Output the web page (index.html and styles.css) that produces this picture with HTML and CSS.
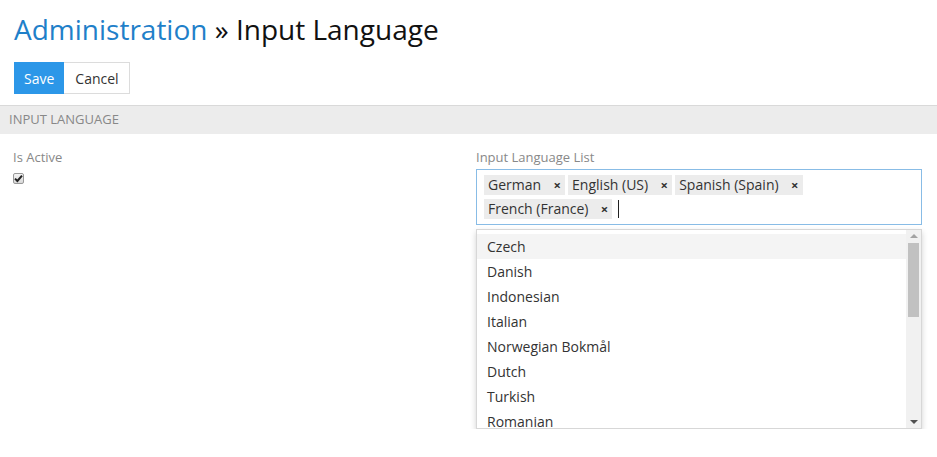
FILE: index.html
```html
<!DOCTYPE html>
<html>
<head>
<meta charset="utf-8">
<link rel="stylesheet" href="styles.css">
</head>
<body>
<div class="top">
  <h1 class="title"><span class="crumb">Administration</span> » Input Language</h1>
  <div class="actions">
    <button class="btn btn-primary">Save</button><button class="btn btn-default">Cancel</button>
  </div>
</div>
<div class="section-head">INPUT LANGUAGE</div>
<div class="form">
  <div class="field">
    <div class="label">Is Active</div>
    <span class="check"><svg width="9" height="9" viewBox="0 0 9 9"><path d="M1 4.6 L3.4 7 L8 1.6" fill="none" stroke="#222" stroke-width="2"/></svg></span>
  </div>
  <div class="field">
    <div class="label">Input Language List</div>
    <div class="tagbox">
      <span class="tag">German<span class="x">×</span></span>
      <span class="tag">English (US)<span class="x">×</span></span>
      <span class="tag">Spanish (Spain)<span class="x">×</span></span>
      <span class="tag">French (France)<span class="x">×</span></span>
      <span class="caret"></span>
    </div>
    <div class="dropdown">
      <ul class="options">
        <li class="hl">Czech</li>
        <li>Danish</li>
        <li>Indonesian</li>
        <li>Italian</li>
        <li>Norwegian Bokmål</li>
        <li>Dutch</li>
        <li>Turkish</li>
        <li>Romanian</li>
      </ul>
      <div class="scrollbar">
        <div class="arrow up"></div>
        <div class="track"><div class="thumb"></div></div>
        <div class="arrow down"></div>
      </div>
    </div>
  </div>
</div>
</body>
</html>
```
FILE: styles.css
```css
* { box-sizing: border-box; }
html, body { margin: 0; padding: 0; background: #fff; }
body { font-family: "Open Sans", "Liberation Sans", sans-serif; color: #333; font-size: 14px; }
.top { padding: 10px 14px 0; }
.title { margin: 0; font-weight: 400; font-size: 28px; line-height: 38px; color: #111; letter-spacing: 0; }
.crumb { color: #1f80c9; }
.actions { display: flex; margin-top: 14px; height: 32px; }
.btn { font-family: inherit; font-size: 14px; height: 32px; margin: 0; padding: 0 10px; border: 0; border-radius: 0; cursor: pointer; }
.btn-primary { background: #2c97e8; color: #fff; }
.btn-default { background: #fff; color: #333; border: 1px solid #dcdcdc; border-left: 0; padding: 0 10px 0 11px; }
.section-head { margin-top: 11px; height: 29px; background: #ececec; border-top: 1px solid #d9d9d9; color: #888; font-size: 13px; line-height: 27px; padding-left: 9px; }
.form { display: grid; grid-template-columns: 448px 446px; column-gap: 15px; padding: 14px 0 0 13px; }
.label { color: #888; font-size: 13px; line-height: 18px; }
.check { display: flex; align-items: center; justify-content: center; width: 11px; height: 11px; margin-top: 7px; border: 1px solid #999; border-radius: 2px; background: linear-gradient(#f4f4f4, #d8d8d8); }
.tagbox { margin-top: 3px; border: 1px solid #88bce6; height: 56px; padding: 5px 6px 0 7px; display: flex; flex-wrap: wrap; align-content: flex-start; gap: 4px 3px; }
.tag { display: inline-flex; align-items: center; height: 20px; background: #ececec; color: #333; font-size: 14px; padding: 0 4px 0 4px; line-height: 20px; }
.tag .x { display: inline-block; width: 8px; text-align: center; font-size: 13px; font-weight: 700; margin-left: 12px; color: #333; }
.caret { width: 1px; height: 18px; background: #222; margin: 1px 0 0 3px; }
.dropdown { margin-top: 4px; height: 200px; border: 1px solid #d7d7d7; box-shadow: 0 3px 6px rgba(0,0,0,0.18); display: flex; background: #fff; }
.options { list-style: none; margin: 0; padding: 4px 0 0 0; flex: 1; overflow: hidden; }
.options li { height: 25px; line-height: 25px; padding-left: 10px; font-size: 14px; color: #333; }
.options li.hl { background: #f4f4f4; }
.scrollbar { width: 15px; background: #f1f1f1; display: flex; flex-direction: column; }
.arrow { height: 12px; display: flex; align-items: center; justify-content: center; }
.arrow::before { content: ""; width: 0; height: 0; border-left: 4px solid transparent; border-right: 4px solid transparent; }
.arrow.up::before { border-bottom: 4px solid #a3a3a3; }
.arrow.down::before { border-top: 4px solid #505050; }
.track { flex: 1; padding: 1px 2px; }
.thumb { height: 74px; background: #c1c1c1; }
```
